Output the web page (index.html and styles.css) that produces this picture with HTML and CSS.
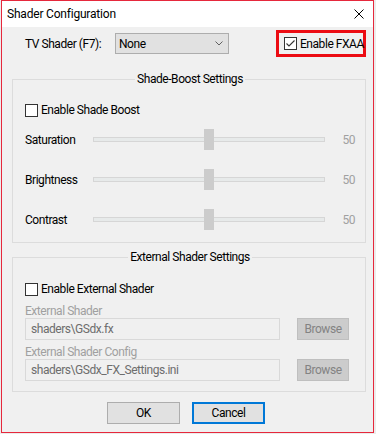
FILE: index.html
```html
<!DOCTYPE html>
<html>
<head>
<meta charset="utf-8">
<link rel="stylesheet" href="styles.css">
</head>
<body>
<div class="window">
  <div class="titlebar">
    <span class="title">Shader Configuration</span>
    <svg class="close" width="10" height="10" viewBox="0 0 10 10"><path d="M0.5 0.5 L9.5 9.5 M9.5 0.5 L0.5 9.5" stroke="#000" stroke-width="1" fill="none"/></svg>
  </div>
  <div class="client">
    <div class="top-row">
      <span class="tv-label">TV Shader (F7):</span>
      <div class="combo"><span>None</span><svg width="8" height="5" viewBox="0 0 8 5"><path d="M0.5 0.5 L4 4 L7.5 0.5" stroke="#606060" stroke-width="1" fill="none"/></svg></div>
      <div class="highlight">
        <div class="check"><span class="box"><svg width="11" height="11" viewBox="0 0 11 11"><path d="M1.5 5.5 L4 8 L9.5 2.5" stroke="#333" stroke-width="1.1" fill="none"/></svg></span><span>Enable FXAA</span></div>
      </div>
    </div>

    <fieldset class="group g1">
      <legend>Shade-Boost Settings</legend>
      <div class="check"><span class="box"></span><span>Enable Shade Boost</span></div>
      <div class="sliders">
        <div class="slider-row"><span class="s-label">Saturation</span><div class="slider"><div class="line"></div><div class="thumb"></div></div><span class="val">50</span></div>
        <div class="slider-row"><span class="s-label">Brightness</span><div class="slider"><div class="line"></div><div class="thumb"></div></div><span class="val">50</span></div>
        <div class="slider-row"><span class="s-label">Contrast</span><div class="slider"><div class="line"></div><div class="thumb"></div></div><span class="val">50</span></div>
      </div>
    </fieldset>

    <fieldset class="group g2">
      <legend>External Shader Settings</legend>
      <div class="check"><span class="box"></span><span>Enable External Shader</span></div>
      <div class="field-label first">External Shader</div>
      <div class="field-row"><div class="field">shaders\GSdx.fx</div><div class="browse">Browse</div></div>
      <div class="field-label">External Shader Config</div>
      <div class="field-row"><div class="field">shaders\GSdx_FX_Settings.ini</div><div class="browse">Browse</div></div>
    </fieldset>

    <div class="buttons">
      <button class="btn">OK</button>
      <button class="btn default">Cancel</button>
    </div>
  </div>
</div>
</body>
</html>
```
FILE: styles.css
```css
* { box-sizing: border-box; }
html, body { margin: 0; padding: 0; }
body {
  background: #ececec;
  font-family: Roboto, "Noto Sans", sans-serif;
  font-size: 12px;
  letter-spacing: -0.45px;
  line-height: 16px;
  color: #000;
  width: 376px;
  height: 434px;
  overflow: hidden;
}
.window {
  margin-left: 1px;
  width: 373px;
  height: 433px;
  border: 1px solid #e6283c;
  background: #f0f0f0;
  display: flex;
  flex-direction: column;
}
.titlebar {
  height: 26px;
  flex: none;
  background: #fff;
  display: flex;
  align-items: center;
  justify-content: space-between;
  padding-left: 5px;
  padding-right: 9px;
}
.title { letter-spacing: -0.2px; }
.close { display: block; }
.client { flex: 1; display: flex; flex-direction: column; }

.top-row {
  display: flex;
  align-items: center;
  margin-top: 3px;
  height: 27px;
  padding-left: 23px;
  padding-right: 7px;
}
.tv-label { width: 90px; }
.combo {
  width: 114px;
  height: 21px;
  background: #e1e1e1;
  border: 1px solid #adadad;
  display: flex;
  align-items: center;
  justify-content: space-between;
  padding-left: 3px;
  padding-right: 5px;
}
.combo svg { display: block; }
.highlight {
  margin-left: auto;
  width: 90px;
  height: 27px;
  border: 3px solid #ec0c13;
  display: flex;
  align-items: center;
  padding-left: 5px;
  white-space: nowrap;
}
.check { display: flex; align-items: center; gap: 3px; height: 16px; white-space: nowrap; }
.box {
  width: 13px;
  height: 13px;
  border: 1px solid #333;
  background: #fff;
  display: block;
  flex: none;
}
.box svg { display: block; }

.group {
  margin: 14px 7px 0 10px;
  border: 1px solid #dcdcdc;
  padding: 15px 10px 12px 12px;
  min-width: 0;
}
.group legend {
  margin: 0 auto;
  padding: 0 2px;
  line-height: 16px;
}
.sliders { display: flex; flex-direction: column; gap: 19px; margin-top: 11px; }
.slider-row { display: flex; align-items: center; height: 21px; }
.s-label { width: 68px; }
.slider { width: 232px; height: 21px; display: grid; place-items: center; }
.slider .line {
  grid-area: 1 / 1;
  width: 100%;
  height: 5px;
  background: #e7eaea;
  border: 1px solid #d6d6d6;
}
.slider .thumb { grid-area: 1 / 1; width: 10px; height: 21px; background: #cccccc; }
.val { width: 30px; text-align: right; color: #a0a0a0; }

.g2 { margin-top: 6px; padding: 16px 10px 10px 12px; }
.field-label { color: #a0a0a0; line-height: 14px; margin-top: 5px; }
.field-label.first { margin-top: 7px; }
.field-row { display: flex; align-items: center; }
.field {
  width: 255px;
  height: 22px;
  border: 1px solid #d9d9d9;
  background: #f0f0f0;
  color: #6d6d6d;
  padding-left: 5px;
  display: flex;
  align-items: center;
}
.browse {
  width: 52px;
  height: 22px;
  margin-left: 17px;
  background: #cccccc;
  border: 1px solid #bfbfbf;
  color: #838383;
  display: flex;
  align-items: center;
  justify-content: center;
}

.buttons {
  display: flex;
  justify-content: center;
  gap: 12px;
  margin-top: 10px;
  padding-right: 3px;
}
.btn {
  width: 73px;
  height: 22px;
  background: #e1e1e1;
  border: 1px solid #adadad;
  font: inherit;
  letter-spacing: inherit;
  color: #000;
  padding: 0;
  margin: 0;
}
.btn.default { border: 2px solid #0078d7; }
```
